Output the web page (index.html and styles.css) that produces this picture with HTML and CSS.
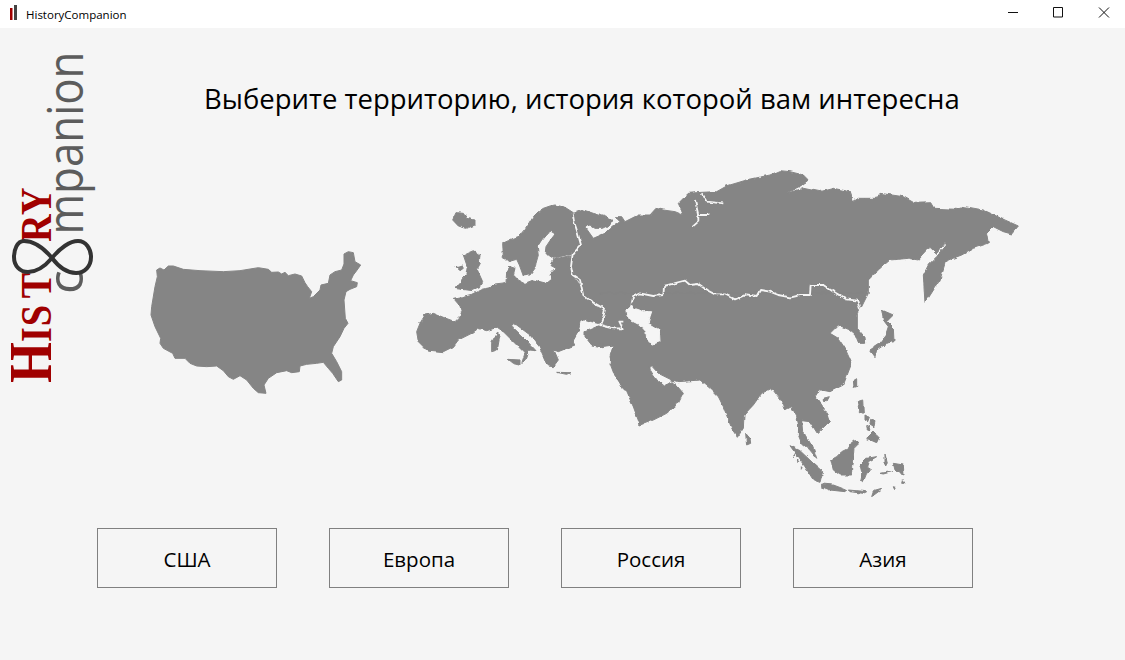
FILE: index.html
```html
<!DOCTYPE html>
<html lang="ru">
<head>
<meta charset="utf-8">
<title>HistoryCompanion</title>
<link rel="stylesheet" href="styles.css">
</head>
<body>
<div class="window">
  <header class="titlebar">
    <svg class="app-icon" width="26" height="28" viewBox="0 0 26 28"><rect class="bar-red" x="10" y="8" width="2.5" height="12"/><rect class="bar-dark" x="14" y="5" width="3" height="15"/></svg>
    <span class="app-name">HistoryCompanion</span>
    <div class="controls">
      <svg class="ctl" width="42" height="28" viewBox="0 0 42 28"><path d="M15 12.500h10"/></svg>
      <svg class="ctl" width="42" height="28" viewBox="0 0 42 28"><path d="M15.500 7.500h9v9.500h-9z"/></svg>
      <svg class="ctl" width="42" height="28" viewBox="0 0 42 28"><path d="M16 7.500l10 10M26 7.500l-10 10"/></svg>
    </div>
  </header>
  <div class="content">
    <aside class="logo">
      <svg class="logo-art" width="97" height="372" viewBox="0 28 97 372">
        <text class="logo-red" transform="translate(51 383) rotate(-90) scale(.85 1)"><tspan class="cap">H</tspan><tspan class="small">I</tspan><tspan class="small" dx="1">S</tspan><tspan class="small" dx="8">T</tspan><tspan class="small" dx="36">R</tspan><tspan class="small" dx="-1">Y</tspan></text>
        <text class="logo-grey" transform="translate(83 294) rotate(-90)">c</text>
        <text class="logo-grey" transform="translate(83 234.500) rotate(-90)" textLength="183" lengthAdjust="spacingAndGlyphs">mpanion</text>
        <path class="logo-eight" d="M52 258C42 246 32 241 24 241C17 241 14 250 14 257C14 266 20 272 28 272C38 272 46 265 52 258C60 248 70 241 78 241C86 241 91 249 91 257C91 266 85 273 76 273C66 273 58 266 52 258Z"/>
      </svg>
    </aside>
    <main class="main">
      <h1 class="title">Выберите территорию, история которой вам интересна</h1>
      <svg class="map" width="1028" height="345" viewBox="97 160 1028 345">
        <defs>
          <filter id="coast" x="0" y="0" width="100%" height="100%" color-interpolation-filters="sRGB">
            <feTurbulence type="fractalNoise" baseFrequency=".16" numOctaves="2" seed="4" result="n"/>
            <feDisplacementMap in="SourceGraphic" in2="n" scale="3.500" xChannelSelector="R" yChannelSelector="G"/>
          </filter>
        </defs>
        <g class="land" transform="translate(140 240) scale(.33333)">
          <path d="M50 90 60 84 72 90 85 78 100 78 130 88 180 92 250 95 300 92 355 83 385 88 395 97 415 96 425 102 435 97 445 107 465 102 485 108 495 128 503 140 515 155 508 175 520 170 540 150 543 135 565 130 570 105 585 95 605 90 612 72 612 42 625 35 640 38 645 65 662 75 650 92 640 105 632 122 652 128 650 140 630 148 618 155 612 180 616 235 624 250 612 265 600 290 580 320 575 340 590 365 605 395 605 420 595 425 578 400 565 385 550 367 530 370 500 373 480 378 478 395 455 398 440 392 410 398 385 415 372 435 378 460 355 458 340 445 320 420 300 407 280 418 265 410 250 392 230 378 200 380 170 378 150 370 135 355 105 355 98 340 70 325 60 310 62 295 45 260 33 225 35 200 45 140 52 110Z"/>
        </g>
        <g class="eurasia" filter="url(#coast)">
        <g class="land" transform="translate(410 200) scale(.33333)">
          <path d="M278 130 295 122 310 115 330 108 345 90 358 70 370 50 385 35 400 25 420 18 435 15 465 22 490 38 495 70 510 130 485 165 470 165 430 175 415 165 405 165 408 140 420 122 437 100 425 92 412 100 395 120 382 140 385 165 378 190 375 205 360 225 340 228 328 195 320 178 295 185 280 170Z"/>
          <path d="M20 395 30 370 45 345 70 340 100 352 135 365 150 350 155 335 150 318 130 295 155 290 185 283 215 268 245 262 255 252 288 248 290 215 300 200 315 205 310 225 325 240 345 250 370 240 410 250 425 238 420 225 438 205 420 195 430 178 475 168 485 170 485 225 515 265 520 290 560 320 585 330 575 372 545 365 525 358 510 365 505 395 488 425 495 435 445 455 432 450 445 480 430 500 415 498 405 480 388 440 360 405 320 375 306 370 312 385 348 420 378 452 358 450 350 475 335 490 345 460 320 435 280 395 262 382 230 392 205 385 185 400 145 420 130 440 100 455 50 450 25 425Z"/>
          <path d="M128 60 138 38 160 40 170 55 195 60 195 75 170 85 145 78Z"/>
          <path d="M160 165 190 152 210 165 208 190 200 205 218 245 208 262 185 272 132 265 150 248 158 235 168 225 172 200Z"/>
          <path d="M138 200 155 195 160 205 150 212Z"/>
          <path d="M245 430 262 400 270 405 262 450 245 455Z"/>
          <path d="M295 478 330 480 330 495 310 490Z"/>
          <path d="M440 517 480 518 470 523Z"/>
          <path d="M525 395 565 378 640 360 660 365 660 400 720 400 720 570 640 570 610 510 600 470 610 435 575 440 545 435 525 410Z"/>
        </g>
        <g class="land" transform="translate(570 160) scale(.33333)">
          <path d="M10 160 40 150 70 160 105 170 125 180 120 195 100 205 75 205 60 195 45 200 70 235 105 220 135 195 150 185 135 170 155 170 165 185 205 165 240 165 258 145 280 150 315 155 340 165 325 130 355 100 395 97 440 95 470 78 530 60 600 45 630 32 660 35 700 45 715 60 690 80 650 100 700 85 750 95 790 85 840 95 850 125 865 115 920 115 930 100 1000 110 1035 130 1085 128 1095 145 1160 148 1185 140 1240 150 1305 180 1345 198 1325 222 1300 215 1270 200 1250 220 1255 250 1210 265 1175 285 1135 300 1125 310 1110 360 1100 375 1065 430 1060 345 1075 315 1100 290 1130 255 1125 250 1100 280 1080 262 1045 300 1015 295 960 300 930 325 895 360 895 400 870 450 830 470 280 470 280 405 205 400 165 440 160 490 150 505 90 490 105 450 40 410 30 370 5 345 5 285 25 245Z"/>
        </g>
        <g class="land" transform="translate(600 300) scale(.33333)">
          <path d="M0 130 40 135 30 190 45 230 75 265 100 320 120 375 160 360 200 340 235 310 250 280 220 245 190 258 175 245 160 225 145 200 155 198 175 220 215 240 235 245 300 240 330 265 355 290 370 320 395 385 412 412 430 385 432 345 460 315 485 280 515 265 550 310 555 330 575 320 590 350 596 375 595 405 605 430 628 448 650 475 640 445 622 415 608 395 605 362 630 365 652 400 688 365 680 340 650 295 645 285 665 270 690 275 730 255 755 190 735 145 715 115 690 100 715 75 745 88 765 105 775 130 797 130 795 112 772 85 772 40 785 15 795 -20 0 -20Z"/>
          <path d="M845 30 880 45 860 65 880 85 882 125 860 130 830 150 825 170 810 150 840 130 855 110 865 80 850 60Z"/>
          <path d="M760 240 770 235 770 260 762 262Z"/>
          <path d="M670 295 688 290 680 305 670 303Z"/>
          <path d="M437 400 450 415 452 430 440 435Z"/>
          <path d="M772 305 788 300 790 340 778 335Z"/>
          <path d="M795 345 808 352 803 365 795 360ZM812 358 825 365 822 380 810 372ZM800 380 806 376 810 392 802 390Z"/>
          <path d="M820 395 838 410 830 428 800 415Z"/>
          <path d="M692 480 710 470 725 455 745 445 760 420 775 432 762 445 760 470 755 495 755 525 720 525 700 510 695 490Z"/>
          <path d="M780 495 800 475 830 470 805 485 800 500 815 510 800 520 790 545 780 540 785 515Z"/>
          <path d="M570 437 600 452 640 490 668 515 660 547 640 540 615 500 590 465Z"/>
          <path d="M580 462 584 464 583 470ZM592 480 596 484 594 488ZM604 500 608 506 604 510ZM665 518 670 520 668 525Z"/>
          <path d="M665 552 700 555 740 570 735 575 690 570 665 560Z"/>
          <path d="M880 490 910 495 912 525 885 510Z"/>
          <path d="M815 590 845 568 820 575Z"/>
          <path d="M745 570 800 575 790 580 750 575Z"/>
          <path d="M855 462 862 490 855 495Z"/>
          <path d="M840 520 875 515 850 522Z"/>
          <path d="M910 542 915 550 908 550ZM880 560 886 562 882 566Z"/>
          <path class="sea" d="M78 30 95 15 100 25 130 35 155 35 150 50 145 70 178 90 180 125 160 132 140 122 138 95 120 75 90 60 80 45Z"/>
        </g>
        <g class="borders" transform="translate(570 160) scale(.33333)">
          <path d="M8 160 12 185 22 215 33 255 8 282 3 320 8 345 30 360 40 405 65 425 105 448 100 470 90 495 130 505 158 505 148 485 160 485"/>
          <path d="M185 430 190 410 210 400 250 408 280 405 282 378 345 362 360 375 385 372 410 390 435 403 465 403 495 418 530 403 560 408 570 390 600 395 625 405 660 412 690 405 720 405 722 375 760 375 790 395 830 418 862 422 870 450"/>
          <path d="M375 120 385 165 385 185 368 200M385 165 415 165M395 100 410 125 460 130"/>
        </g>
        </g>
      </svg>
      <nav class="choices">
        <button class="choice">США</button>
        <button class="choice">Европа</button>
        <button class="choice">Россия</button>
        <button class="choice">Азия</button>
      </nav>
    </main>
  </div>
</div>
</body>
</html>
```

FILE: styles.css
```css
* { box-sizing: border-box; }
html, body { margin: 0; height: 100%; }
body { background: #f5f5f5; font-family: "Open Sans", "Noto Sans", sans-serif; color: #000; overflow: hidden; }
.window { display: flex; flex-direction: column; width: 1125px; height: 660px; }
.titlebar { display: flex; align-items: center; height: 28px; background: #fff; flex: none; }
.app-icon { display: block; flex: none; }
.bar-red { fill: #a00000; }
.bar-dark { fill: #444; }
.app-name { font-size: 11.5px; color: #000; }
.controls { display: flex; gap: 3px; margin-left: auto; }
.ctl { display: block; fill: none; stroke: #111; stroke-width: 1; }
.content { display: flex; flex: 1; }
.logo { width: 97px; flex: none; }
.logo-art { display: block; overflow: visible; }
.logo-red { font-family: "Liberation Serif", serif; font-weight: 700; fill: #a00000; }
.cap { font-size: 62px; }
.small { font-size: 45px; }
.logo-grey { font-family: "Open Sans", sans-serif; font-weight: 400; font-size: 50px; fill: #5c5c5c; }
.logo-eight { fill: none; stroke: #333; stroke-width: 4; }
.main { flex: 1; min-width: 0; display: flex; flex-direction: column; }
.title { margin: 52px 0 0 107px; font-size: 27.5px; font-weight: 400; line-height: 38px; height: 80px; white-space: nowrap; }
.map { display: block; flex: none; }
.land { fill: #858585; stroke: #858585; stroke-width: 3; stroke-linejoin: round; }
.land .sea { fill: #f5f5f5; stroke: #f5f5f5; }
.borders { fill: none; stroke: #f5f5f5; stroke-width: 5.500; stroke-linejoin: round; }
.choices { display: flex; gap: 52px; margin-top: 23px; }
.choice { width: 180px; height: 60px; background: transparent; border: 1px solid #808080; font: 400 20.500px "Open Sans", sans-serif; color: #000; padding: 2px 0 0; }
```
